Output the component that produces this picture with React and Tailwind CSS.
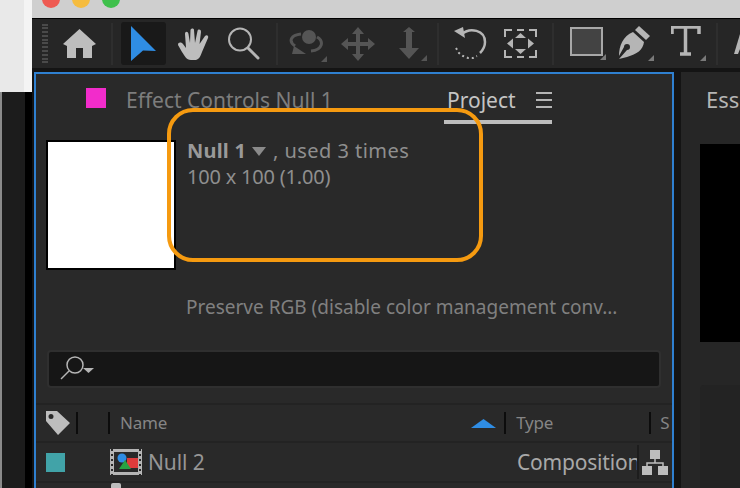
const font = { fontFamily: '"Noto Sans", sans-serif' };

function Corner() {
  return <path d="M0 6 L6 0 L6 6 Z" fill="#7a7a7a" />;
}

function ToolIcon({ className, view, children }) {
  return (
    <svg className={className} viewBox={view} xmlns="http://www.w3.org/2000/svg">
      {children}
    </svg>
  );
}

function Divider() {
  return <div className="h-[42px] w-[2px] shrink-0 bg-[#2e2e2e]" />;
}

function Toolbar() {
  return (
    <div className="flex h-[49px] shrink-0 items-center bg-[#262626] pl-[10px]">
      {/* grip */}
      <div className="flex h-[40px] w-[6px] shrink-0 flex-col justify-between">
        {[...Array(11)].map((_, i) => (
          <div key={i} className="h-[2px] w-[6px] bg-[#4a4a4a]" />
        ))}
      </div>
      {/* home */}
      <ToolIcon className="ml-[15px] h-[31px] w-[33px] shrink-0" view="0 0 33 31">
        <path d="M16.5 1 L33 16 L29 18 L29 30 L20 30 L20 20 L13 20 L13 30 L4 30 L4 18 L0 16 Z" fill="#bdbdbd" />
      </ToolIcon>
      <div className="ml-[15px]"><Divider /></div>
      {/* selection tool */}
      <div className="ml-[8px] flex h-[43px] w-[45px] shrink-0 items-center justify-center rounded-[3px] bg-[#191919]">
        <ToolIcon className="h-[35px] w-[25px]" view="0 0 25 35">
          <path d="M0 0 L25 25 L12 24.5 L0 35 Z" fill="#2f8de4" />
        </ToolIcon>
      </div>
      {/* hand */}
      <ToolIcon className="ml-[12px] h-[32px] w-[31px] shrink-0" view="0 0 31 32">
        <path d="M13 32 C8 32 7 28 4 24 L0 17 C0 14 3 14 5 16 L8 20 L7 6 C7 3 10 3 10.500 6 L12 15 L12.500 2 C13 0 16 0 16 2 L17 15 L19.500 3 C20 1 23 1 23 4 L21.500 16 L27 8 C29 6 31 8 30 10 L24 24 C22 30 20 32 17 32 Z" fill="#bdbdbd" />
      </ToolIcon>
      {/* zoom */}
      <ToolIcon className="ml-[18px] h-[33px] w-[33px] shrink-0" view="0 0 33 33">
        <circle cx="13" cy="12.500" r="11" fill="none" stroke="#b5b5b5" strokeWidth="2" />
        <path d="M21 21 L31 31" stroke="#b5b5b5" strokeWidth="3" strokeLinecap="round" />
      </ToolIcon>
      <div className="ml-[16px]"><Divider /></div>
      {/* rotate */}
      <ToolIcon className="ml-[11px] h-[36px] w-[38px] shrink-0" view="0 0 38 36">
        <circle cx="20" cy="11" r="7" fill="#555" />
        <path d="M12 8 C2 9 -1 15 6 20 M28 11 C35 15 34 24 22 25" fill="none" stroke="#555" strokeWidth="3" />
        <path d="M5 20 L17 28 L3 28 Z" fill="#555" />
        <path d="M0 6 L6 0 L6 6 Z" fill="#555" transform="translate(32 30)" />
      </ToolIcon>
      {/* move */}
      <ToolIcon className="ml-[14px] h-[34px] w-[34px] shrink-0" view="0 0 34 34">
        <path d="M17 0 L23 7 L19 7 L19 15 L27 15 L27 11 L34 17 L27 23 L27 19 L19 19 L19 27 L23 27 L17 34 L11 27 L15 27 L15 19 L7 19 L7 23 L0 17 L7 11 L7 15 L15 15 L15 7 L11 7 Z" fill="#555" />
      </ToolIcon>
      {/* track z */}
      <ToolIcon className="ml-[20px] h-[34px] w-[32px] shrink-0" view="0 0 32 34">
        <path d="M14 0 L20 5 L17 5 L17 21 L24 21 L14 32 L4 21 L11 21 L11 5 L8 5 Z" fill="#555" />
        <path d="M0 6 L6 0 L6 6 Z" fill="#555" transform="translate(26 28)" />
      </ToolIcon>
      <div className="ml-[10px]"><Divider /></div>
      {/* undo */}
      <ToolIcon className="ml-[15px] h-[33px] w-[33px] shrink-0" view="0 0 33 33">
        <path d="M8 7 C16 0 31 3 31 15 C31 20 29 23 26 26" fill="none" stroke="#b5b5b5" strokeWidth="2.500" />
        <path d="M0 4 L9 0 L11 11 Z" fill="#b5b5b5" />
        <path d="M2 21 L5 26 L9 29 L14 31 L19 31 L23 29" fill="none" stroke="#b5b5b5" strokeWidth="2" strokeDasharray="2 3" />
      </ToolIcon>
      {/* camera */}
      <ToolIcon className="ml-[17px] h-[29px] w-[33px] shrink-0" view="0 0 33 29">
        <path d="M1 8 L1 1 L8 1 M13 1 L20 1 M25 1 L32 1 L32 8 M32 21 L32 28 L25 28 M20 28 L13 28 M8 28 L1 28 L1 21" fill="none" stroke="#b5b5b5" strokeWidth="2" />
        <path d="M16.500 4 L22 9 L11 9 Z M16.500 25 L22 20 L11 20 Z M3 14.500 L9 9.500 L9 19.500 Z M30 14.500 L24 9.500 L24 19.500 Z" fill="#b5b5b5" />
      </ToolIcon>
      <div className="ml-[15px]"><Divider /></div>
      {/* rectangle */}
      <ToolIcon className="ml-[16px] h-[34px] w-[39px] shrink-0" view="0 0 39 34">
        <rect x="1" y="1" width="31" height="27" fill="#434343" stroke="#a8a8a8" strokeWidth="2" />
        <g transform="translate(30 27)"><Corner /></g>
      </ToolIcon>
      {/* pen */}
      <ToolIcon className="ml-[9px] h-[36px] w-[37px] shrink-0" view="0 0 37 36">
        <path d="M21 0 L32 10 L28 14 L17 4 Z" fill="#b5b5b5" />
        <path d="M15 6 L26 16 C25 24 19 28 9 31 L1 33 L9 24 A3 3 0 1 0 6 21 L1 30 C1 20 5 10 15 6 Z" fill="#b5b5b5" />
        <g transform="translate(30 29)"><Corner /></g>
      </ToolIcon>
      {/* type */}
      <ToolIcon className="ml-[16px] h-[36px] w-[35px] shrink-0" view="0 0 35 36">
        <path d="M1 8 L1 1 L28 1 L28 8 M14.500 1 L14.500 27 M9 28 L20 28" fill="none" stroke="#b5b5b5" strokeWidth="3.500" />
        <g transform="translate(29 29)"><Corner /></g>
      </ToolIcon>
      <div className="ml-[10px]"><Divider /></div>
      {/* next tool, cut off by the window */}
      <ToolIcon className="ml-[16px] h-[36px] w-[20px] shrink-0" view="0 0 20 36">
        <path d="M6 8 L0 28 L4 28 L8 18 Z" fill="#b5b5b5" />
      </ToolIcon>
    </div>
  );
}

function HeaderTick({ className }) {
  return <div className={`h-[22px] w-[2px] shrink-0 bg-[#0c0c0c] ${className}`} />;
}

function ProjectPanel() {
  return (
    <div className="relative flex w-[640px] shrink-0 flex-col overflow-hidden border-2 border-b-0 border-[#2f80d0] bg-[#292929] text-[#8f8f8f]" style={font}>
      {/* tabs */}
      <div className="flex h-[50px] shrink-0 pl-[50px]">
        <div className="mt-[14px] h-[20px] w-[20px] shrink-0 bg-[#f22ccb]" />
        <div className="ml-[20px] mt-[12px] w-[205px] shrink-0 whitespace-nowrap text-[21px] leading-[28px] text-[#7d7d7d]">Effect Controls Null 1</div>
        <div className="ml-[113px] flex h-[50px] w-[108px] shrink-0 flex-col border-b-4 border-[#bdbdbd] pl-[3px]">
          <div className="flex items-center pt-[12px]">
            <span className="w-[68px] shrink-0 text-[21px] leading-[28px] text-[#c4c4c4]">Project</span>
            <div className="ml-[21px] flex w-[16px] flex-col gap-[5px]">
              <div className="h-[2px] bg-[#b5b5b5]" />
              <div className="h-[2px] bg-[#b5b5b5]" />
              <div className="h-[2px] bg-[#b5b5b5]" />
            </div>
          </div>
        </div>
      </div>

      {/* footage info */}
      <div className="ml-[10px] mt-[16px] flex">
        <div className="h-[130px] w-[130px] shrink-0 border-2 border-black bg-white" />
        <div className="ml-[11px]">
          <div className="-mt-[2px] flex items-center text-[20px] leading-[26px]">
            <span className="font-bold tracking-[0.2px] text-[#999]">Null 1</span>
            <svg className="ml-[6px] h-[9px] w-[14px]" viewBox="0 0 14 9"><path d="M0 0 L14 0 L7 9 Z" fill="#8a8a8a" /></svg>
            <span className="ml-[7px] tracking-[0.45px]">, used 3 times</span>
          </div>
          <div className="mt-[1px] text-[20px] leading-[24px] tracking-[-0.2px]">100 x 100 (1.00)</div>
        </div>
      </div>

      <div className="ml-[150px] mt-[24px] whitespace-nowrap text-[19px] leading-[26px] text-[#808080]">
        Preserve RGB (disable color management conv...
      </div>

      {/* search */}
      <div className="ml-[11px] mt-[30px] flex h-[38px] w-[614px] shrink-0 items-center rounded-[4px] border-2 border-[#2f2f2f] bg-[#161616] pl-[11px]">
        <svg className="h-[26px] w-[36px]" viewBox="0 0 36 26">
          <circle cx="15" cy="9" r="8" fill="none" stroke="#b5b5b5" strokeWidth="1.500" />
          <path d="M9 15 L1 23" stroke="#b5b5b5" strokeWidth="1.500" />
          <path d="M23 12 L34 12 L28.500 17 Z" fill="#b5b5b5" />
        </svg>
      </div>

      {/* column header */}
      <div className="mt-[15px] flex h-[40px] shrink-0 items-center border-y-2 border-[#232323] pl-[10px]">
        <svg className="h-[24px] w-[24px] shrink-0" viewBox="0 0 24 24">
          <path fillRule="evenodd" d="M0 0 L11 0 L24 12 L12 24 L0 10 Z M5 3 A2.500 2.500 0 1 0 5 8 A2.500 2.500 0 1 0 5 3 Z" fill="#bdbdbd" />
        </svg>
        <HeaderTick className="ml-[6px]" />
        <HeaderTick className="ml-[30px]" />
        <span className="ml-[10px] text-[17px] leading-[24px] tracking-[-0.2px] text-[#858585]">Name</span>
        <svg className="ml-[304px] h-[9px] w-[25px] shrink-0" viewBox="0 0 25 9"><path d="M0 9 L12.500 0 L25 9 Z" fill="#2f8de4" /></svg>
        <HeaderTick className="ml-[8px]" />
        <span className="ml-[10px] text-[17px] leading-[24px] tracking-[-0.2px] text-[#858585]">Type</span>
        <HeaderTick className="ml-[96px]" />
        <span className="ml-[9px] text-[17px] leading-[24px] text-[#858585]">S</span>
      </div>

      {/* row */}
      <div className="flex h-[40px] shrink-0 items-center border-b-2 border-[#232323] pl-[10px]">
        <div className="h-[19px] w-[19px] shrink-0 bg-[#41a3a8]" />
        <svg className="ml-[45px] h-[26px] w-[32px] shrink-0" viewBox="0 0 32 26">
          <rect width="32" height="26" fill="#b5b5b5" />
          <rect x="4" y="3" width="24" height="20" fill="#292929" />
          <path d="M2 0 L2 26 M30 0 L30 26" stroke="#292929" strokeWidth="2" strokeDasharray="2 3" />
          <path d="M17 9 L28 9 L28 19 L17 19 Z" fill="#dd3b3b" />
          <circle cx="12" cy="9" r="4.500" fill="#2f8de4" />
          <path d="M15 11 L21 20 L9 20 Z" fill="#27a243" />
        </svg>
        <span className="ml-[6px] w-[56px] shrink-0 whitespace-nowrap text-[21px] leading-[28px] tracking-[-0.1px] text-[#969696]">Null 2</span>
        <span className="ml-[313px] w-[120px] shrink-0 overflow-hidden whitespace-nowrap text-[21px] leading-[28px] tracking-[-0.2px] text-[#a8a8a8]">Composition</span>
        <div className="flex h-[34px] w-[34px] shrink-0 items-center justify-center border-l-2 border-[#1d1d1d]">
          <svg className="h-[25px] w-[26px]" viewBox="0 0 26 25">
            <rect x="8" y="0" width="10" height="9" fill="#bdbdbd" />
            <path d="M13 9 L13 13 M5 17 L5 13 L21 13 L21 17" fill="none" stroke="#bdbdbd" strokeWidth="1.500" />
            <rect x="0" y="16" width="10" height="9" fill="#bdbdbd" />
            <rect x="16" y="16" width="10" height="9" fill="#bdbdbd" />
          </svg>
        </div>
      </div>

      {/* top of the next row, cut off by the window */}
      <div className="ml-[75px] h-[8px] w-[10px] rounded-t-[2px] bg-[#bdbdbd]" />

      {/* hand-drawn highlight over the panel */}
      <div className="absolute left-[131px] top-[34px] h-[154px] w-[316px] rounded-[26px] border-4 border-[#f59a10]" />
    </div>
  );
}

function EssentialPanel() {
  return (
    <div className="ml-[7px] flex min-w-0 flex-1 flex-col overflow-hidden bg-[#262626] pl-[19px] pt-[13px]" style={font}>
      <div className="pl-[6px] whitespace-nowrap text-[22px] leading-[28px] text-[#b5b5b5]">Essential Graphics</div>
      <div className="mt-[31px] h-[198px] bg-black" />
      <div className="mt-[43px] flex-1 rounded-tl-[4px] bg-[#232323]" />
    </div>
  );
}

export default function App() {
  return (
    <div className="flex h-[488px] w-[740px] overflow-hidden bg-[#141414]">
      {/* desktop behind the window */}
      <div className="flex w-[32px] shrink-0 flex-col">
        <div className="flex h-[92px] shrink-0">
          <div className="w-[24px] bg-[#e9e9e9]" />
          <div className="w-[8px] bg-[#f4f4f4]" />
        </div>
        <div className="flex flex-1">
          <div className="w-[2px] bg-[#8a8a8a]" />
          <div className="w-[23px] bg-[#1c1c1c]" />
          <div className="w-[7px] bg-black" />
        </div>
      </div>

      <div className="flex min-w-0 flex-1 flex-col">
        {/* title bar */}
        <div className="flex h-[19px] shrink-0 gap-[12px] overflow-hidden border-b-[1px] border-black bg-[#cfcfcf] pl-[10px]">
          <div className="-mt-[10px] h-[18px] w-[18px] rounded-full bg-[#ee5a52]" />
          <div className="-mt-[10px] h-[18px] w-[18px] rounded-full bg-[#f5bc3f]" />
          <div className="-mt-[10px] h-[18px] w-[18px] rounded-full bg-[#3fc04c]" />
        </div>
        <Toolbar />
        <div className="flex min-h-0 flex-1 pl-[2px] pt-[4px]">
          <ProjectPanel />
          <EssentialPanel />
        </div>
      </div>
    </div>
  );
}
